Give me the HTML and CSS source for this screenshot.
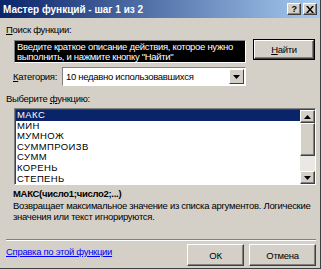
FILE: index.html
```html
<!DOCTYPE html>
<html>
<head>
    <meta charset="utf-8">
    <link rel="stylesheet" href="styles.css">
</head>
<body>
    <div class="dialog">
        <div class="titlebar">
            <span class="title">Мастер функций - шаг 1 из 2</span>
            <div class="title-buttons">
                <span class="cap-btn">?</span>
                <span class="cap-btn close">
                    <svg width="8" height="7" viewBox="0 0 8 7"><path d="M0 0h2l2 2.5L6 0h2L5 3.5 8 7H6L4 4.5 2 7H0l3-3.5z" fill="#000"/></svg>
                </span>
            </div>
        </div>

        <div class="content">
            <p class="label"><u>П</u>оиск функции:</p>
            <div class="search-row">
                <div class="search-box">Введите краткое описание действия, которое нужно выполнить, и нажмите кнопку "Найти"</div>
                <button class="btn find"><u>Н</u>айти</button>
            </div>

            <div class="category-row">
                <span class="cat-label"><u>К</u>атегория:</span>
                <div class="select">
                    <span class="select-value">10 недавно использовавшихся</span>
                    <span class="select-arrow">
                        <svg width="7" height="4" viewBox="0 0 7 4"><path d="M0 0h7L3.5 4z" fill="#000"/></svg>
                    </span>
                </div>
            </div>

            <p class="label pick">Выберите <u>ф</u>ункцию:</p>
            <div class="listbox">
                <ul class="items">
                    <li class="selected">МАКС</li>
                    <li>МИН</li>
                    <li>МУМНОЖ</li>
                    <li>СУММПРОИЗВ</li>
                    <li>СУММ</li>
                    <li>КОРЕНЬ</li>
                    <li>СТЕПЕНЬ</li>
                </ul>
                <div class="scrollbar">
                    <span class="sb-btn"><svg width="7" height="4" viewBox="0 0 7 4"><path d="M3.5 0L7 4H0z" fill="#000"/></svg></span>
                    <span class="sb-thumb"></span>
                    <span class="sb-track"></span>
                    <span class="sb-btn"><svg width="7" height="4" viewBox="0 0 7 4"><path d="M0 0h7L3.5 4z" fill="#000"/></svg></span>
                </div>
            </div>

            <p class="signature">МАКС(число1;число2;...)</p>
            <p class="description">Возвращает максимальное значение из списка аргументов. Логические значения или текст игнорируются.</p>

            <div class="separator"></div>

            <div class="footer">
                <a class="help" href="#">Справка по этой функции</a>
                <div class="actions">
                    <button class="btn ok">ОК</button>
                    <button class="btn cancel">Отмена</button>
                </div>
            </div>
        </div>
    </div>
</body>
</html>
```

FILE: styles.css
```css
* {
    box-sizing: border-box;
}

body {
    margin: 0;
    background: #d4d0c8;
    font-family: 'Liberation Sans', Arial, sans-serif;
    font-size: 9.5px;
    letter-spacing: -0.3px;
    color: #000;
}

p {
    margin: 0;
}

.dialog {
    width: 321px;
    height: 269px;
    background: #d4d0c8;
    border-right: 1px solid #404040;
    border-bottom: 1px solid #404040;
    overflow: hidden;
}

/* Title bar */
.titlebar {
    height: 18px;
    background: linear-gradient(to right, #0a246a, #a6caf0);
    display: flex;
    justify-content: space-between;
    align-items: center;
    padding: 0 3px;
}

.title {
    color: #fff;
    font-weight: bold;
    font-size: 10px;
    letter-spacing: 0;
}

.title-buttons {
    display: flex;
    gap: 2px;
}

.cap-btn {
    width: 14px;
    height: 12px;
    background: #d4d0c8;
    border: 1px solid;
    border-color: #fff #404040 #404040 #fff;
    box-shadow: inset -1px -1px 0 #808080;
    display: flex;
    align-items: center;
    justify-content: center;
    font-weight: bold;
    font-size: 9px;
    line-height: 1;
}

/* Content */
.content {
    padding: 5px 4px 0 6px;
}

.label {
    height: 13px;
    line-height: 13px;
}

.search-row {
    display: flex;
    align-items: flex-start;
    margin-top: 4px;
    padding-left: 8px;
}

.search-box {
    width: 232px;
    height: 23px;
    background: #000;
    color: #fff;
    line-height: 10px;
    padding: 1px 2px;
    border: 1px solid;
    border-color: #808080 #fff #fff #808080;
}

.btn {
    font-family: inherit;
    font-size: 9.5px;
    letter-spacing: inherit;
    color: #000;
    background: #d4d0c8;
    border: 1px solid;
    border-color: #fff #404040 #404040 #fff;
    box-shadow: inset -1px -1px 0 #808080;
    padding: 0;
}

.find {
    width: 60px;
    height: 19px;
    margin-left: 8px;
    outline: 1px solid #000;
}

.category-row {
    display: flex;
    align-items: center;
    height: 19px;
    margin-top: 4px;
    padding-left: 7px;
}

.cat-label {
    width: 49px;
}

.select {
    width: 184px;
    height: 19px;
    background: #fff;
    border: 1px solid;
    border-color: #808080 #fff #fff #808080;
    display: flex;
    align-items: center;
    justify-content: space-between;
    padding: 1px;
}

.select-value {
    padding-left: 2px;
}

.select-arrow {
    width: 15px;
    height: 15px;
    background: #d4d0c8;
    border: 1px solid;
    border-color: #fff #404040 #404040 #fff;
    display: flex;
    align-items: center;
    justify-content: center;
}

.pick {
    margin-top: 6px;
}

.listbox {
    margin: 3px 0 0 8px;
    height: 77px;
    background: #fff;
    border: 1px solid;
    border-color: #808080 #fff #fff #808080;
    box-shadow: inset 1px 1px 0 #404040;
    display: flex;
    padding: 1px 0 0 1px;
}

.items {
    list-style: none;
    margin: 0;
    padding: 0;
    flex: 1;
    overflow: hidden;
}

.items li {
    height: 10.6px;
    line-height: 10.6px;
    padding-left: 1px;
    font-size: 9.5px;
    letter-spacing: 0.4px;
}

.items li.selected {
    background: #0a246a;
    color: #fff;
}

.scrollbar {
    width: 15px;
    display: flex;
    flex-direction: column;
    background: #eae8e4;
}

.sb-btn, .sb-thumb {
    background: #d4d0c8;
    border: 1px solid;
    border-color: #fff #404040 #404040 #fff;
    box-shadow: inset -1px -1px 0 #808080;
    display: flex;
    align-items: center;
    justify-content: center;
}

.sb-btn {
    height: 13px;
}

.sb-thumb {
    height: 33px;
}

.sb-track {
    flex: 1;
}

.signature {
    font-weight: bold;
    letter-spacing: -0.3px;
    margin: 2px 0 0 7px;
    height: 13px;
    line-height: 13px;
}

.description {
    margin: 0 0 0 7px;
    line-height: 11px;
}

.separator {
    margin-top: 17px;
    height: 2px;
    border-top: 1px solid #808080;
    border-bottom: 1px solid #fff;
}

.footer {
    display: flex;
    justify-content: space-between;
    align-items: flex-start;
    margin-top: 3px;
}

.help {
    color: #0000ff;
    margin-top: 1px;
    line-height: 13px;
}

.actions {
    display: flex;
    gap: 5px;
}

.ok, .cancel {
    width: 57px;
    height: 22px;
}

.cancel {
    width: 67px;
}
```
